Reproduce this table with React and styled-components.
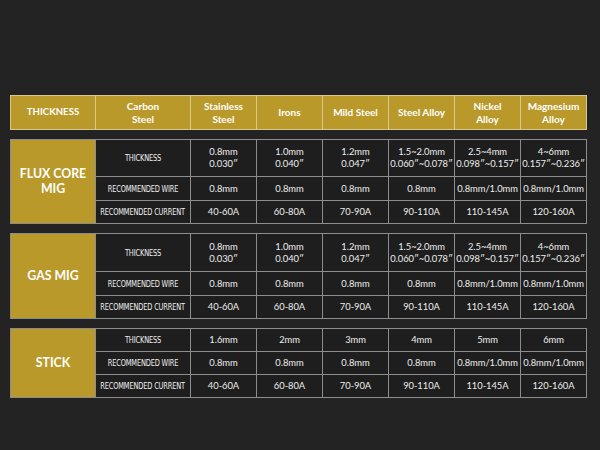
import React from "react";
import styled, { createGlobalStyle } from "styled-components";

const Global = createGlobalStyle`
  html, body { margin: 0; padding: 0; background: #232323; }
  body { width: 600px; height: 450px; overflow: hidden; font-family: "Lato", "Open Sans", sans-serif; }
`;

const Page = styled.div`
  width: 600px;
  height: 450px;
  box-sizing: border-box;
  padding: 95px 0 0 10px;
  display: flex;
  flex-direction: column;
  gap: 9px;
`;

const Grid = styled.div`
  display: grid;
  grid-template-columns: 84px 94px repeat(6, 65px);
  grid-template-rows: ${(p) => p.$rows};
  gap: 1px;
  padding: 1px;
  width: max-content;
  background: ${(p) => p.$line};
`;

const HeadCell = styled.div`
  background: #b9992a;
  color: #ffffff;
  font-weight: 700;
  font-size: ${(p) => (p.$small ? "9.6px" : "10px")};
  line-height: 12.7px;
  display: flex;
  align-items: center;
  justify-content: center;
  text-align: center;
  white-space: pre-line;
`;

const SectionLabel = styled.div`
  grid-row: 1 / span 3;
  background: #b9992a;
  color: #ffffff;
  font-weight: 700;
  font-size: 12.3px;
  line-height: 14.5px;
  display: flex;
  align-items: center;
  justify-content: center;
  text-align: center;
  white-space: pre-line;
`;

const RowLabel = styled.div`
  background: #1e1e1e;
  display: flex;
  align-items: center;
  justify-content: center;
  white-space: nowrap;
  overflow: hidden;
`;

const RowLabelText = styled.span`
  display: inline-block;
  color: #f0f0f0;
  font-family: "DejaVu Sans Condensed", "DejaVu Sans", sans-serif;
  font-size: 9px;
  letter-spacing: -0.2px;
  transform: scaleX(0.82);
`;

const Value = styled.div`
  background: #1e1e1e;
  color: #ededed;
  font-size: 9.4px;
  line-height: 12px;
  display: flex;
  align-items: center;
  justify-content: center;
  text-align: center;
  white-space: pre-line;
  letter-spacing: -0.05px;
`;

const headers = [
  "Carbon\nSteel",
  "Stainless\nSteel",
  "Irons",
  "Mild Steel",
  "Steel Alloy",
  "Nickel\nAlloy",
  "Magnesium\nAlloy",
];

const migThickness = [
  "0.8mm\n0.030\u2033",
  "1.0mm\n0.040\u2033",
  "1.2mm\n0.047\u2033",
  "1.5~2.0mm\n0.060\u2033~0.078\u2033",
  "2.5~4mm\n0.098\u2033~0.157\u2033",
  "4~6mm\n0.157\u2033~0.236\u2033",
];
const wire = ["0.8mm", "0.8mm", "0.8mm", "0.8mm", "0.8mm/1.0mm", "0.8mm/1.0mm"];
const current = ["40-60A", "60-80A", "70-90A", "90-110A", "110-145A", "120-160A"];
const stickThickness = ["1.6mm", "2mm", "3mm", "4mm", "5mm", "6mm"];

const sections = [
  { label: "FLUX CORE\nMIG", rows: "36px 23px 22px", thickness: migThickness },
  { label: "GAS MIG", rows: "37px 23px 22px", thickness: migThickness },
  { label: "STICK", rows: "22px 22px 22px", thickness: stickThickness },
];

const Section = ({ s }) => {
  const rows = [
    ["THICKNESS", s.thickness],
    ["RECOMMENDED WIRE", wire],
    ["RECOMMENDED CURRENT", current],
  ];
  return (
    <Grid $rows={s.rows} $line="#8d8d8d">
      <SectionLabel>{s.label}</SectionLabel>
      {rows.map(([name, vals]) => (
        <React.Fragment key={name}>
          <RowLabel>
            <RowLabelText>{name}</RowLabelText>
          </RowLabel>
          {vals.map((v, i) => (
            <Value key={i}>{v}</Value>
          ))}
        </React.Fragment>
      ))}
    </Grid>
  );
};

export default function App() {
  return (
    <>
      <Global />
      <Page>
        <Grid $rows="33px" $line="#d8c890">
          <HeadCell $small>THICKNESS</HeadCell>
          {headers.map((h) => (
            <HeadCell key={h}>{h}</HeadCell>
          ))}
        </Grid>
        {sections.map((s) => (
          <Section key={s.label} s={s} />
        ))}
      </Page>
    </>
  );
}
